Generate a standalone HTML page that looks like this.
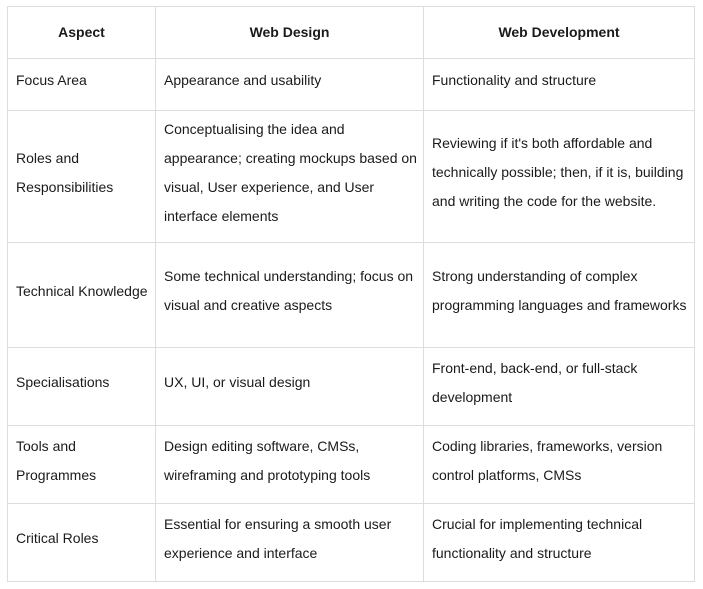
<!DOCTYPE html>
<html><head><meta charset="utf-8"><style>
html,body{margin:0;padding:0;background:#fff;width:703px;height:589px;overflow:hidden}
table{position:absolute;left:7px;top:6px;border-collapse:collapse;font-family:"Liberation Sans",Arial,sans-serif;font-size:14px;color:#1a1a1a;line-height:29px}
td,th{border:1px solid #ddd;padding:0 0 8px 8px;vertical-align:middle;text-align:left;white-space:nowrap}
th{text-align:center;font-weight:bold;padding:0}
</style></head><body>
<table>
<colgroup><col style="width:148px"><col style="width:268px"><col style="width:271px"></colgroup>
<tr style="height:52px"><th>Aspect</th><th>Web Design</th><th>Web Development</th></tr>
<tr style="height:52px"><td>Focus Area</td><td>Appearance and usability</td><td>Functionality and structure</td></tr>
<tr style="height:132px"><td>Roles and<br>Responsibilities</td><td>Conceptualising the idea and<br>appearance; creating mockups based on<br>visual, User experience, and User<br>interface elements</td><td>Reviewing if it's both affordable and<br>technically possible; then, if it is, building<br>and writing the code for the website.</td></tr>
<tr style="height:105px"><td>Technical Knowledge</td><td>Some technical understanding; focus on<br>visual and creative aspects</td><td>Strong understanding of complex<br>programming languages and frameworks</td></tr>
<tr style="height:78px"><td>Specialisations</td><td>UX, UI, or visual design</td><td>Front-end, back-end, or full-stack<br>development</td></tr>
<tr style="height:78px"><td>Tools and<br>Programmes</td><td>Design editing software, CMSs,<br>wireframing and prototyping tools</td><td>Coding libraries, frameworks, version<br>control platforms, CMSs</td></tr>
<tr style="height:78px"><td>Critical Roles</td><td>Essential for ensuring a smooth user<br>experience and interface</td><td>Crucial for implementing technical<br>functionality and structure</td></tr>
</table>
</body></html>
